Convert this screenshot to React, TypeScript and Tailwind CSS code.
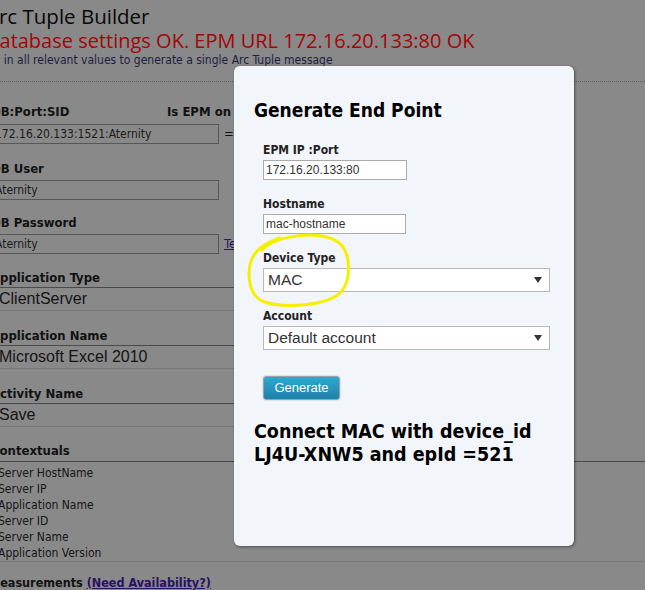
import React from 'react';

const cond = "font-['DejaVu_Sans_Condensed','DejaVu_Sans',sans-serif]";
const arial = "font-['Liberation_Sans',Arial,sans-serif]";

const contextuals = [
  'Server HostName',
  'Server IP',
  'Application Name',
  'Server ID',
  'Server Name',
  'Application Version',
];

const SelectRow: React.FC<{ label: string; value: string }> = ({ label, value }) => (
  <div>
    <div className={`mt-[17px] ml-[-9px] text-[13px] leading-[16px] font-bold text-[#121212] ${cond}`}>{label}</div>
    <div className={`mt-[1px] ml-[-9px] w-[420px] h-[24px] border-t border-b border-t-[#4a4a4a] border-b-[#767676] px-[8px] text-[16px] leading-[22px] text-[#141414] ${arial}`}>
      {value}
    </div>
  </div>
);

const Caret: React.FC = () => (
  <svg width="8" height="6" viewBox="0 0 8 6" className="shrink-0">
    <path d="M0 0 H8 L4 6 Z" fill="#333" />
  </svg>
);

const App: React.FC = () => {
  return (
    <div className="relative w-[645px] h-[590px] overflow-hidden bg-[#898989]">
      {/* Page behind the dialog */}
      <div className="ml-[-14px] pt-[3px]">
        <h1 className="text-[20.5px] leading-[26px] text-[#080808] font-['Open_Sans',sans-serif]">Arc Tuple Builder</h1>
        <p className="ml-[-1px] text-[20px] leading-[24px] text-[#a40606] font-['Open_Sans',sans-serif]">
          Database settings OK. EPM URL 172.16.20.133:80 OK
        </p>
        <p className={`text-[12px] leading-[15px] text-[#1d1d42] ${cond}`}>
          Fill in all relevant values to generate a single Arc Tuple message
        </p>
      </div>
      <div className="mt-[13px] border-t border-dotted border-[#5c5c5c]" />

      <div className={`${cond} text-[#121212]`}>
        <div className="mt-[22px] ml-[-9px] flex text-[13px] leading-[16px] font-bold">
          <span className="w-[176px]">DB:Port:SID</span>
          <span>Is EPM on</span>
        </div>
        <div className="mt-[4px] ml-[-9px] flex items-center">
          <div className="w-[228px] h-[20px] border border-[#575757] px-[3px] text-[12px] leading-[18px] text-[#1a1a1a]">
            172.16.20.133:1521:Aternity
          </div>
          <span className="ml-[5px] text-[13px]">=</span>
        </div>

        <div className="mt-[17px] ml-[-9px] text-[13px] leading-[16px] font-bold">DB User</div>
        <div className="mt-[3px] ml-[-9px] w-[228px] h-[20px] border border-[#575757] px-[3px] text-[12px] leading-[18px] text-[#1a1a1a]">
          Aternity
        </div>

        <div className="mt-[15px] ml-[-9px] text-[13px] leading-[16px] font-bold">DB Password</div>
        <div className="mt-[3px] ml-[-9px] flex items-center">
          <div className="w-[228px] h-[20px] border border-[#575757] px-[3px] text-[12px] leading-[18px] text-[#1a1a1a]">
            Aternity
          </div>
          <span className="ml-[5px] text-[13px] underline text-[#2a1560]">Test</span>
        </div>

        <div className="mt-[-1px]">
          <SelectRow label="Application Type" value="ClientServer" />
          <SelectRow label="Application Name" value="Microsoft Excel 2010" />
          <SelectRow label="Activity Name" value="Save" />
        </div>

        <div className="mt-[16px] ml-[-9px] text-[13px] leading-[16px] font-bold">Contextuals</div>
        <div className="mt-[2px] border-t border-[#4a4a4a]">
          <ul className="mt-[3px] ml-[-2px] text-[12px] leading-[16px] text-[#161616]">
            {contextuals.map((c) => (
              <li key={c}>{c}</li>
            ))}
          </ul>
        </div>
        <div className="border-t border-[#777777]" />
        <div className="mt-[13px] ml-[-11px] text-[12.5px] leading-[16px] font-bold">
          Measurements{' '}
          <span className="underline text-[#2a0f66]">(Need Availability?)</span>
        </div>
      </div>

      {/* Dialog */}
      <div className="absolute left-[234px] top-[66px] w-[340px] h-[480px] rounded-[6px] bg-[#f2f5fa] shadow-[1px_1px_3px_rgba(0,0,0,0.45)] px-[20px] pt-[32px]">
        <h2 className={`text-[19px] leading-[24px] font-bold text-black ${cond}`}>Generate End Point</h2>

        <div className="pl-[9px]">
          <div className={`mt-[20px] text-[12px] leading-[16px] font-bold text-[#222] ${cond}`}>EPM IP :Port</div>
          <div className={`mt-[2px] w-[144px] h-[20px] bg-white border border-[#ababab] px-[2px] text-[12px] leading-[18px] text-[#333] ${arial}`}>
            172.16.20.133:80
          </div>

          <div className={`mt-[16px] text-[12px] leading-[16px] font-bold text-[#222] ${cond}`}>Hostname</div>
          <div className={`mt-[2px] w-[143px] h-[20px] bg-white border border-[#ababab] px-[2px] text-[12px] leading-[18px] text-[#333] ${arial}`}>
            mac-hostname
          </div>

          <div className={`mt-[16px] text-[12px] leading-[16px] font-bold text-[#222] ${cond}`}>Device Type</div>
          <div className={`mt-[2px] w-[287px] h-[24px] bg-white border border-[#b9b9b9] pl-[4px] pr-[7px] flex items-center justify-between text-[15.5px] text-[#333] ${arial}`}>
            <span>MAC</span>
            <Caret />
          </div>

          <div className={`mt-[16px] text-[12px] leading-[16px] font-bold text-[#222] ${cond}`}>Account</div>
          <div className={`mt-[2px] w-[287px] h-[24px] bg-white border border-[#b9b9b9] pl-[4px] pr-[7px] flex items-center justify-between text-[15.5px] text-[#333] ${arial}`}>
            <span>Default account</span>
            <Caret />
          </div>

          <button
            className={`mt-[26px] w-[77px] h-[24px] rounded-[3px] border border-[#9aa3aa] bg-gradient-to-b from-[#2fa9cf] to-[#1d82aa] text-white text-[13px] leading-[20px] shadow-[0_0_0_1px_#dfe3e8] ${arial}`}
          >
            Generate
          </button>
        </div>

        <p className={`mt-[20px] text-[19.5px] leading-[23px] font-bold text-black ${cond}`}>
          Connect MAC with device_id
          <br />
          LJ4U-XNW5 and epId =521
        </p>
      </div>

      {/* Hand-drawn highlight */}
      <svg className="absolute left-0 top-0 pointer-events-none" width="645" height="590">
        <path
          d="M262 250 C276 236 318 229 338 242 C352 252 351 281 341 292 C328 306 282 309 262 301 C247 293 246 268 254 255 C259 247 268 242 280 238"
          fill="none"
          stroke="#f6f000"
          strokeWidth="3"
          strokeLinecap="round"
        />
      </svg>
    </div>
  );
};

export default App;
